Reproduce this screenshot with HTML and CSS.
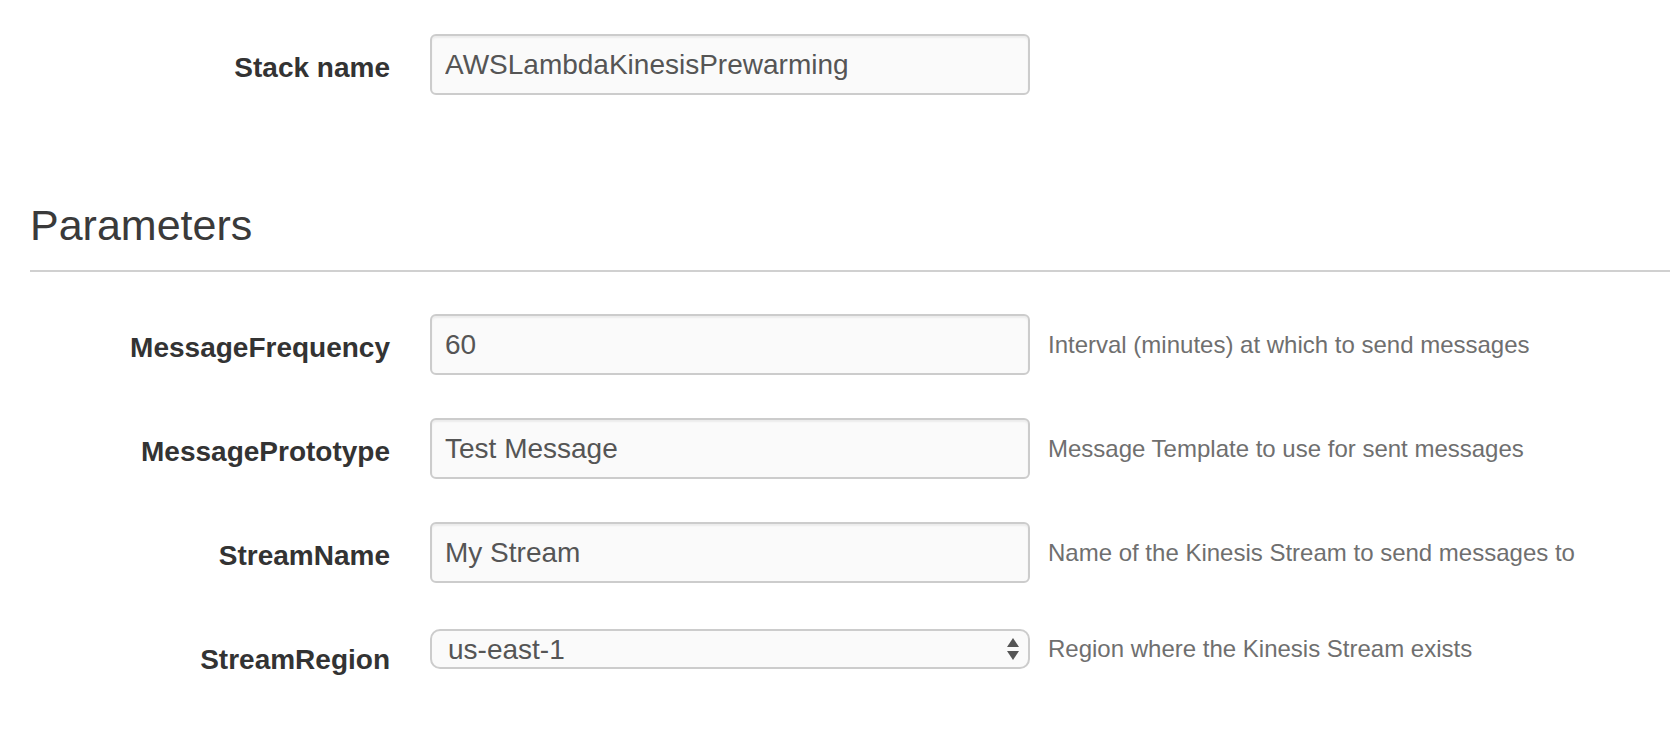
FILE: index.html
```html
<!DOCTYPE html>
<html>
<head>
<meta charset="utf-8">
<link rel="stylesheet" href="styles.css">
</head>
<body>
<div class="page">
  <div class="row stack-row">
    <label class="label">Stack name</label>
    <div class="field">
      <input class="input" type="text" value="AWSLambdaKinesisPrewarming">
    </div>
  </div>

  <h2 class="section-title">Parameters</h2>

  <div class="params">
    <div class="row">
      <label class="label">MessageFrequency</label>
      <div class="field">
        <input class="input" type="text" value="60">
        <span class="help">Interval (minutes) at which to send messages</span>
      </div>
    </div>
    <div class="row">
      <label class="label">MessagePrototype</label>
      <div class="field">
        <input class="input" type="text" value="Test Message">
        <span class="help">Message Template to use for sent messages</span>
      </div>
    </div>
    <div class="row">
      <label class="label">StreamName</label>
      <div class="field">
        <input class="input" type="text" value="My Stream">
        <span class="help">Name of the Kinesis Stream to send messages to</span>
      </div>
    </div>
    <div class="row">
      <label class="label">StreamRegion</label>
      <div class="field select-field">
        <div class="select-wrap">
          <select class="select">
            <option>us-east-1</option>
          </select>
          <svg class="select-arrows" width="12" height="22" viewBox="0 0 12 22">
            <path d="M6 0 L12 9 L0 9 Z" fill="#555"/>
            <path d="M0 13 L12 13 L6 22 Z" fill="#555"/>
          </svg>
        </div>
        <span class="help">Region where the Kinesis Stream exists</span>
      </div>
    </div>
  </div>
</div>
</body>
</html>
```

FILE: styles.css
```css
html, body {
  margin: 0;
  padding: 0;
  background: #ffffff;
}

body {
  font-family: "Liberation Sans", Arial, Helvetica, sans-serif;
  color: #333333;
}

.page {
  padding: 34px 0 0 30px;
}

.row {
  display: flex;
  align-items: flex-start;
  height: 61px;
  margin-bottom: 43px;
}

.stack-row {
  margin-bottom: 0;
}

.label {
  width: 360px;
  flex: none;
  text-align: right;
  font-size: 28px;
  font-weight: bold;
  line-height: 61px;
  padding-top: 3px;
  color: #333333;
}

.field {
  margin-left: 40px;
  display: flex;
  align-items: center;
  gap: 18px;
}

.input {
  box-sizing: border-box;
  width: 600px;
  height: 61px;
  border: 2px solid #cccccc;
  border-radius: 6px;
  background: #fafafa;
  box-shadow: inset 0 2px 2px rgba(0, 0, 0, 0.06);
  padding: 0 13px;
  font-family: "Liberation Sans", Arial, Helvetica, sans-serif;
  font-size: 28px;
  color: #555555;
  outline: none;
}

.help {
  font-size: 24px;
  color: #6f6f6f;
  white-space: nowrap;
}

.section-title {
  margin: 107px 0 0 0;
  font-size: 43px;
  font-weight: normal;
  line-height: 1.1;
  color: #3a3a3a;
  padding-bottom: 21px;
  border-bottom: 2px solid #d0d0d0;
}

.params {
  padding-top: 42px;
}

.select-field {
  margin-top: 3px;
}

.select-wrap {
  position: relative;
  width: 600px;
  height: 40px;
}

.select {
  box-sizing: border-box;
  width: 600px;
  height: 40px;
  -webkit-appearance: none;
  appearance: none;
  border: 2px solid #cccccc;
  border-radius: 10px;
  background: #fafafa;
  padding: 0 40px 0 16px;
  font-family: "Liberation Sans", Arial, Helvetica, sans-serif;
  font-size: 28px;
  color: #555555;
  outline: none;
}

.select-arrows {
  position: absolute;
  right: 11px;
  top: 9px;
  pointer-events: none;
}
```
